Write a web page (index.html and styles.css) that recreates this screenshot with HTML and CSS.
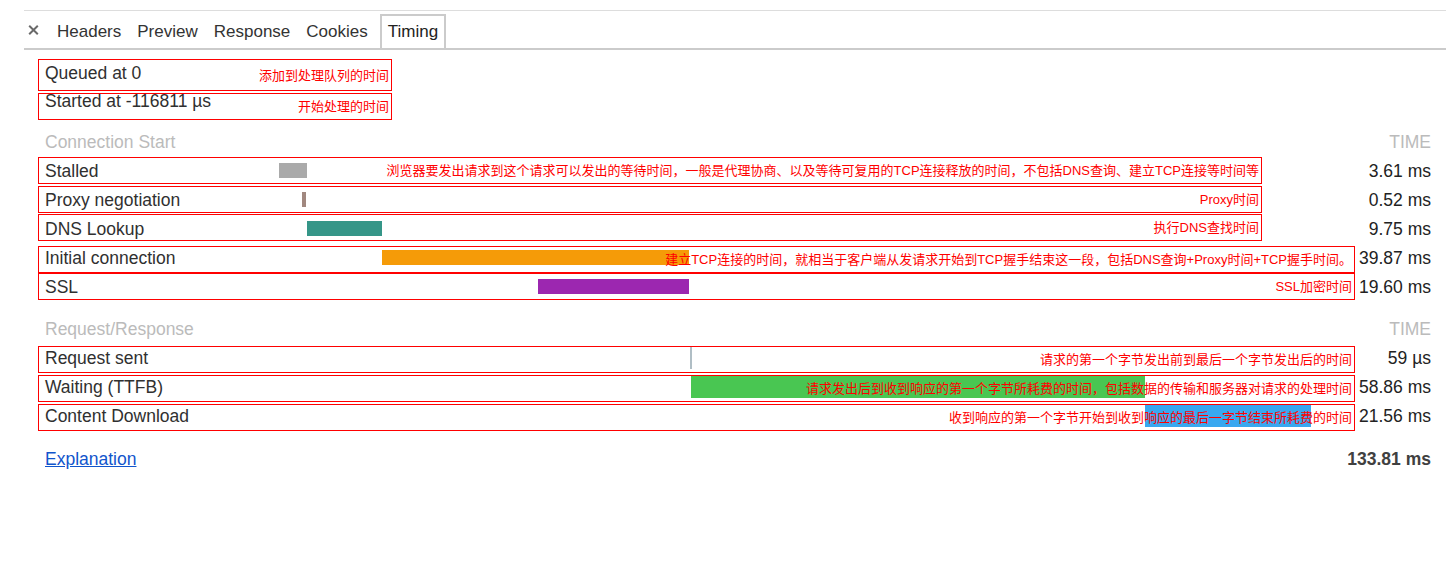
FILE: index.html
```html
<!DOCTYPE html>
<html lang="zh-CN">
<head>
<meta charset="utf-8">
<title>Timing</title>
<link rel="stylesheet" href="styles.css">
</head>
<body>
<div class="panel">
  <div class="tabbar">
    <span class="close" aria-label="Close"><svg width="11" height="10" viewBox="0 0 11 10"><path d="M1.2 0.8 L9.8 9.2 M9.8 0.8 L1.2 9.2" stroke="#6a6a6a" stroke-width="2" fill="none"/></svg></span>
    <span class="tab">Headers</span>
    <span class="tab">Preview</span>
    <span class="tab">Response</span>
    <span class="tab">Cookies</span>
    <span class="tab tab--active">Timing</span>
  </div>

  <div class="timing">
    <div class="block">
      <div class="row row--meta">
        <div class="label">Queued at 0</div>
        <div class="note note--meta note--tall"><span>添加到处理队列的时间</span></div>
      </div>
      <div class="row row--meta">
        <div class="label">Started at -116811 µs</div>
        <div class="note note--meta note--d6"><span>开始处理的时间</span></div>
      </div>
    </div>

    <div class="section section--first">
      <div class="row">
        <div class="section-title">Connection Start</div>
        <div class="time-head">TIME</div>
      </div>
      <div class="row">
        <div class="label">Stalled</div>
        <div class="track"><span class="bar bar--stalled" style="margin-left:0px;width:28px"></span></div>
        <div class="note note--short note--d1"><span>浏览器要发出请求到这个请求可以发出的等待时间，一般是代理协商、以及等待可复用的TCP连接释放的时间，不包括DNS查询、建立TCP连接等时间等</span></div>
        <div class="time">3.61 ms</div>
      </div>
      <div class="row">
        <div class="label">Proxy negotiation</div>
        <div class="track"><span class="bar bar--proxy" style="margin-left:23px;width:4px"></span></div>
        <div class="note note--short note--d1"><span>Proxy时间</span></div>
        <div class="time">0.52 ms</div>
      </div>
      <div class="row">
        <div class="label">DNS Lookup</div>
        <div class="track"><span class="bar bar--dns" style="margin-left:28px;width:75px"></span></div>
        <div class="note note--short"><span>执行DNS查找时间</span></div>
        <div class="time">9.75 ms</div>
      </div>
      <div class="row">
        <div class="label">Initial connection</div>
        <div class="track"><span class="bar bar--connect" style="margin-left:103px;width:307px"></span></div>
        <div class="note note--long note--d3"><span>建立TCP连接的时间，就相当于客户端从发请求开始到TCP握手结束这一段，包括DNS查询+Proxy时间+TCP握手时间。</span></div>
        <div class="time">39.87 ms</div>
      </div>
      <div class="row">
        <div class="label">SSL</div>
        <div class="track"><span class="bar bar--ssl" style="margin-left:259px;width:151px"></span></div>
        <div class="note note--long note--d1"><span>SSL加密时间</span></div>
        <div class="time">19.60 ms</div>
      </div>
    </div>

    <div class="section">
      <div class="row">
        <div class="section-title">Request/Response</div>
        <div class="time-head">TIME</div>
      </div>
      <div class="row">
        <div class="label">Request sent</div>
        <div class="track"><span class="bar bar--tall bar--sent" style="margin-left:411px;width:2px"></span></div>
        <div class="note note--long note--d3"><span>请求的第一个字节发出前到最后一个字节发出后的时间</span></div>
        <div class="time">59 µs</div>
      </div>
      <div class="row">
        <div class="label">Waiting (TTFB)</div>
        <div class="track"><span class="bar bar--tall bar--waiting" style="margin-left:412px;width:454px"></span></div>
        <div class="note note--long note--d3"><span>请求发出后到收到响应的第一个字节所耗费的时间，包括数据的传输和服务器对请求的处理时间</span></div>
        <div class="time">58.86 ms</div>
      </div>
      <div class="row">
        <div class="label">Content Download</div>
        <div class="track"><span class="bar bar--tall bar--download" style="margin-left:866px;width:166px"></span></div>
        <div class="note note--long note--d3"><span>收到响应的第一个字节开始到收到响应的最后一字节结束所耗费的时间</span></div>
        <div class="time">21.56 ms</div>
      </div>
    </div>

    <div class="section section--footer">
      <div class="row">
        <div class="label"><a class="link" href="#">Explanation</a></div>
        <div class="time time--total">133.81 ms</div>
      </div>
    </div>
  </div>
</div>
</body>
</html>
```

FILE: styles.css
```css
* { box-sizing: border-box; }

html, body {
  margin: 0;
  background: #ffffff;
}

body {
  font-family: "Liberation Sans", Arial, Helvetica, sans-serif;
  color: #333333;
  width: 1446px;
  height: 563px;
  overflow: hidden;
}

.panel {
  margin: 10px 0 0 24px;
}

/* ---------- tab bar ---------- */
.tabbar {
  display: flex;
  align-items: flex-end;
  height: 40px;
  border-top: 1px solid #dddddd;
  border-bottom: 2px solid #cbcbcb;
  font-size: 17px;
}

.close {
  display: flex;
  margin: 0 10px 13px 4px;
}

.tab {
  height: 34px;
  padding: 1px 6px 0;
  border: 2px solid transparent;
  border-bottom: 0;
  line-height: 30px;
  color: #333333;
  white-space: nowrap;
}

.tab--active {
  margin-left: 4px;
  border-color: #cbcbcb;
  color: #222222;
}

/* ---------- timing table ---------- */
.timing {
  padding: 9px 0 0 14px;
  font-size: 17.5px;
}

.row {
  display: grid;
  grid-template-columns: 241px 1032px 44px 76px;
  grid-template-rows: 29px;
  align-items: center;
}

.row--meta {
  grid-template-rows: 28px;
}

.row > * {
  grid-row: 1;
}

.label {
  grid-column: 1;
  padding: 1px 0 0 7px;
  white-space: nowrap;
  color: #303030;
}

.track {
  grid-column: 2;
  display: flex;
  align-items: center;
  height: 100%;
}

.bar {
  flex: none;
  height: 15px;
}

.bar--tall { height: 22px; }

.bar--stalled { background: #aaaaaa; }
.bar--proxy { background: #a1887f; }
.bar--dns { background: #359688; }
.bar--connect { background: #f59b08; }
.bar--ssl { background: #9c27b0; }
.bar--sent { background: #b0bec5; }
.bar--waiting { background: #49c652; }
.bar--download { background: #38a8f0; }

/* red annotation boxes */
.note {
  grid-column: 1 / 3;
  align-self: start;
  display: flex;
  align-items: center;
  justify-content: flex-end;
  height: 27px;
  padding-right: 2px;
  border: 1px solid #ff0000;
  font-family: "Liberation Sans", "Noto Sans CJK SC", sans-serif;
  font-size: 13px;
  line-height: 1;
  color: #ff0000;
  white-space: nowrap;
}

.note--short { margin-right: 49px; }
.note--long { grid-column: 1 / 4; }
.note--meta { width: 354px; }
.note--tall { height: 32px; }
.note--d1 { margin-top: 1px; }
.note--d3 { margin-top: 3px; }
.note--d6 { margin-top: 6px; }

.time {
  grid-column: 4;
  justify-self: end;
  padding-top: 1px;
  white-space: nowrap;
  color: #222222;
}

.time--total {
  font-weight: bold;
  color: #404040;
}

.section {
  margin-top: 13px;
}

.section--first {
  margin-top: 12px;
}

.section--footer {
  margin-top: 14px;
}

.section-title {
  grid-column: 1 / 3;
  padding: 1px 0 0 7px;
  color: #bbbbbb;
}

.time-head {
  grid-column: 4;
  justify-self: end;
  padding-top: 1px;
  color: #bbbbbb;
}

.link {
  color: #1155cc;
  text-decoration: underline;
}
```
